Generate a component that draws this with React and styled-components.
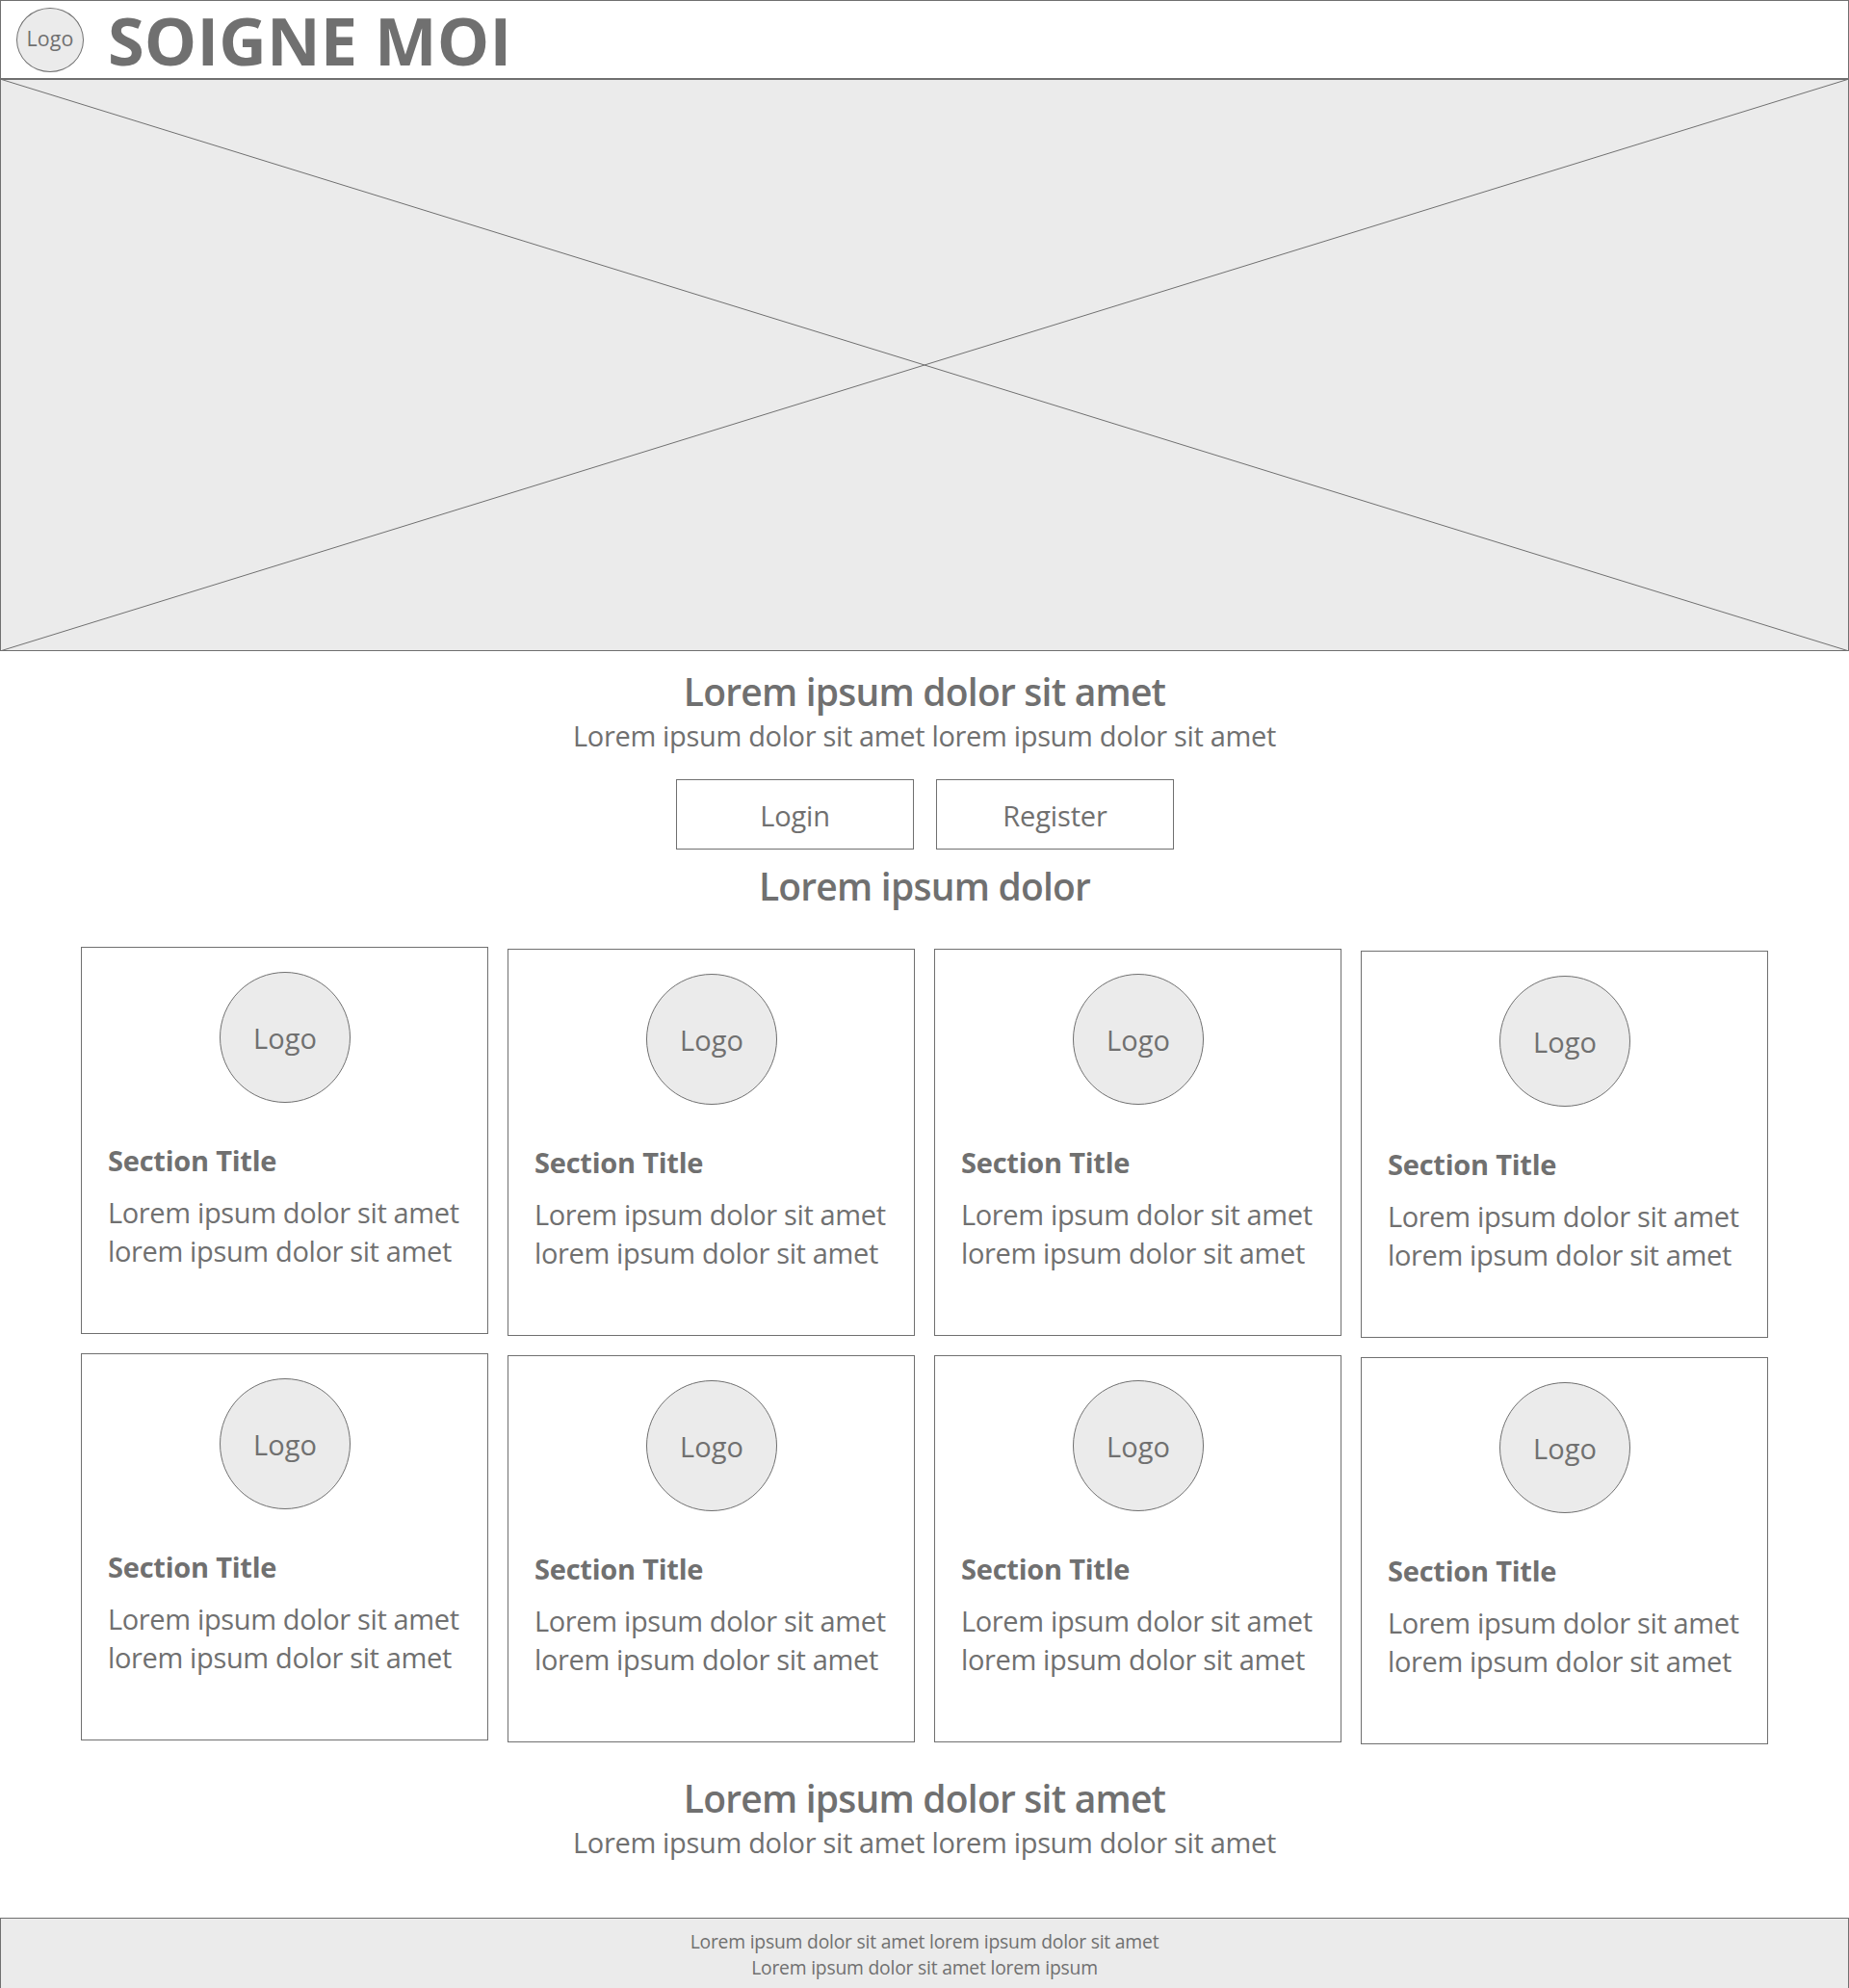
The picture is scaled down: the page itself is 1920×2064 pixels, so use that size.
import React from "react";
import styled, { createGlobalStyle } from "styled-components";

const INK = "#707070";
const FILL = "#ebebeb";

const GlobalStyle = createGlobalStyle`
  *, *::before, *::after { box-sizing: border-box; }
  body {
    margin: 0;
    background: #ffffff;
    color: ${INK};
    font-family: "Open Sans", "Noto Sans", sans-serif;
  }
  h1, h2, h3, p { margin: 0; font-weight: 400; }
`;

const Page = styled.div`
  width: 1920px;
  height: 2064px;
  overflow: hidden;
  display: flex;
  flex-direction: column;
`;

const Header = styled.header`
  flex: none;
  height: 82px;
  border: 1px solid ${INK};
  display: flex;
  align-items: flex-start;
  padding: 0 0 0 16px;
`;

const Disc = styled.div`
  flex: none;
  width: ${(p) => p.$w}px;
  height: ${(p) => p.$h}px;
  margin-top: ${(p) => p.$top || 0}px;
  border: 1px solid ${INK};
  border-radius: 50%;
  background: ${FILL};
  display: flex;
  justify-content: center;
  padding-top: ${(p) => p.$drop}px;
  font-size: ${(p) => p.$size}px;
  line-height: 40px;
  letter-spacing: ${(p) => p.$track}px;
`;

const SiteTitle = styled.h1`
  margin-left: 25px;
  font-size: 68.5px;
  font-weight: 700;
  line-height: 82px;
  height: 80px;
  letter-spacing: 0.1px;
  white-space: nowrap;
`;

const Hero = styled.section`
  flex: none;
  height: 594px;
  outline: 1px solid ${INK};
  outline-offset: -1px;
  background: ${FILL};
  svg { display: block; width: 100%; height: 100%; }
`;

const Intro = styled.section`
  flex: none;
  display: flex;
  flex-direction: column;
  align-items: center;
  padding-top: ${(p) => p.$top}px;
`;

const Heading = styled.h2`
  font-size: 39px;
  font-weight: 600;
  line-height: 52px;
  letter-spacing: -0.78px;
  white-space: nowrap;
`;

const Lead = styled.p`
  font-size: 29px;
  line-height: 40px;
  letter-spacing: -0.34px;
  white-space: nowrap;
`;

const Actions = styled.div`
  display: flex;
  gap: 23px;
  margin: 25px 0 12px;
  padding-left: 1px;
`;

const Button = styled.button`
  width: 247px;
  height: 73px;
  border: 1px solid ${INK};
  background: #ffffff;
  color: ${INK};
  font: inherit;
  font-size: 29px;
  line-height: 40px;
  letter-spacing: -0.15px;
  padding: 3px 0 0;
`;

const Columns = styled.main`
  flex: none;
  display: flex;
  gap: 20px;
  padding: 37px 0 0 84px;
  height: 883px;
`;

const Column = styled.div`
  width: 423px;
  display: flex;
  flex-direction: column;
  gap: 20px;
  padding-top: ${(p) => p.$drop}px;
`;

const Card = styled.article`
  height: 402px;
  flex: none;
  border: 1px solid ${INK};
  padding: 25px 0 0 27px;
  display: flex;
  flex-direction: column;
`;

const CardLogo = styled.div`
  padding-left: 116px;
`;

const CardTitle = styled.h3`
  margin-top: 40px;
  font-size: 29px;
  font-weight: 700;
  line-height: 40px;
  letter-spacing: -0.23px;
  white-space: nowrap;
`;

const CardText = styled.p`
  margin-top: 14px;
  font-size: 29px;
  line-height: 40px;
  letter-spacing: -0.36px;
  white-space: nowrap;
`;

const Footer = styled.footer`
  flex: none;
  margin-top: auto;
  height: 73px;
  border: 1px solid ${INK};
  border-bottom: 0;
  background: ${FILL};
  padding-top: 10px;
  text-align: center;
  font-size: 19.3px;
  line-height: 27px;
  letter-spacing: -0.2px;
`;

const drops = [0, 2, 2, 4];

function SectionCard() {
  return (
    <Card>
      <CardLogo>
        <Disc $w={136} $h={136} $size={29} $track={0.1} $drop={48}>Logo</Disc>
      </CardLogo>
      <CardTitle>Section Title</CardTitle>
      <CardText>
        Lorem ipsum dolor sit amet
        <br />
        lorem ipsum dolor sit amet
      </CardText>
    </Card>
  );
}

export default function App() {
  return (
    <>
      <GlobalStyle />
      <Page>
        <Header>
          <Disc $w={70} $h={67} $top={7} $size={21.4} $track={0.1} $drop={11}>Logo</Disc>
          <SiteTitle>SOIGNE MOI</SiteTitle>
        </Header>
        <Hero>
          <svg viewBox="0 0 1920 594" preserveAspectRatio="none" stroke={INK} strokeWidth="1">
            <line x1="0" y1="0" x2="1920" y2="594" />
            <line x1="0" y1="594" x2="1920" y2="0" />
          </svg>
        </Hero>
        <Intro $top={16}>
          <Heading>Lorem ipsum dolor sit amet</Heading>
          <Lead>Lorem ipsum dolor sit amet lorem ipsum dolor sit amet</Lead>
          <Actions>
            <Button>Login</Button>
            <Button>Register</Button>
          </Actions>
          <Heading>Lorem ipsum dolor</Heading>
        </Intro>
        <Columns>
          {drops.map((drop, i) => (
            <Column key={i} $drop={drop}>
              <SectionCard />
              <SectionCard />
            </Column>
          ))}
        </Columns>
        <Intro $top={12}>
          <Heading>Lorem ipsum dolor sit amet</Heading>
          <Lead>Lorem ipsum dolor sit amet lorem ipsum dolor sit amet</Lead>
        </Intro>
        <Footer>
          <p>Lorem ipsum dolor sit amet lorem ipsum dolor sit amet</p>
          <p>Lorem ipsum dolor sit amet lorem ipsum</p>
        </Footer>
      </Page>
    </>
  );
}
